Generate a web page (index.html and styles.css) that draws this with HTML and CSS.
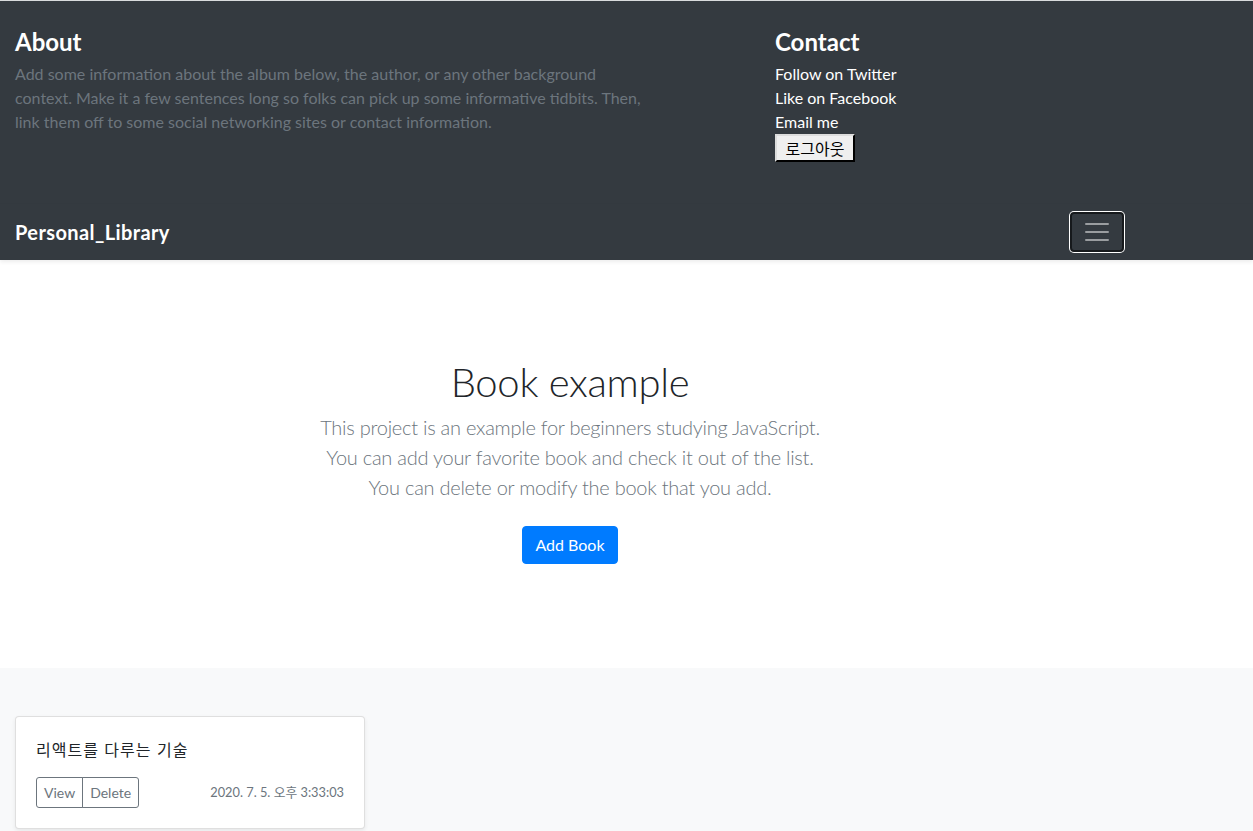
FILE: index.html
```html
<!DOCTYPE html>
<html lang="ko">
<head>
<meta charset="utf-8">
<title>Personal_Library</title>
<link rel="stylesheet" href="styles.css">
</head>
<body>
<header>
  <div class="topline"></div>
  <div class="collapse-panel">
    <div class="container">
      <div class="row">
        <div class="col-about">
          <h4 class="heading">About</h4>
          <p class="about-text">Add some information about the album below, the author, or any other background context. Make it a few sentences long so folks can pick up some informative tidbits. Then, link them off to some social networking sites or contact information.</p>
        </div>
        <div class="col-contact">
          <h4 class="heading">Contact</h4>
          <ul class="contact-list">
            <li><a href="#">Follow on Twitter</a></li>
            <li><a href="#">Like on Facebook</a></li>
            <li><a href="#">Email me</a></li>
            <button class="logout" type="button">로그아웃</button>
          </ul>
        </div>
      </div>
    </div>
  </div>
  <div class="navbar">
    <div class="container nav-inner">
      <a href="#" class="brand"><strong>Personal_Library</strong></a>
      <button class="toggler" type="button" aria-label="Toggle navigation">
        <svg width="30" height="30" viewBox="0 0 30 30"><path stroke="rgba(255,255,255,0.5)" stroke-linecap="round" stroke-miterlimit="10" stroke-width="2" d="M4 7h22M4 15h22M4 23h22"/></svg>
      </button>
    </div>
  </div>
</header>
<main>
  <section class="jumbotron">
    <div class="container">
      <h1 class="jumbo-heading">Book example</h1>
      <p class="lead">This project is an example for beginners studying JavaScript.<br>You can add your favorite book and check it out of the list.<br>You can delete or modify the book that you add.</p>
      <p class="last"><a href="#" class="btn-primary">Add Book</a></p>
    </div>
  </section>
  <div class="album">
    <div class="container">
      <div class="cards">
        <div class="card">
          <div class="card-body">
            <p class="card-text">리액트를 다루는 기술</p>
            <div class="card-foot">
              <div class="btn-group">
                <button type="button" class="btn-outline">View</button>
                <button type="button" class="btn-outline">Delete</button>
              </div>
              <small class="date">2020. 7. 5. 오후 3:33:03</small>
            </div>
          </div>
        </div>
      </div>
    </div>
  </div>
</main>
</body>
</html>
```

FILE: styles.css
```css
* { box-sizing: border-box; }
html, body { margin: 0; padding: 0; }
body {
  font-family: "Lato", "Noto Sans CJK KR", sans-serif;
  font-size: 16px;
  line-height: 1.5;
  color: #212529;
  background: #fff;
}
a { text-decoration: none; }
.topline { height: 1px; background: #d9dbdd; }
.container { width: 1140px; padding: 0 15px; margin-left: 0; }
.collapse-panel { background: #343a40; }
.row { display: flex; margin: 0 -15px; }
.col-about { width: 665px; padding: 24px 15px; }
.col-contact { width: 380px; margin-left: 95px; padding: 24px 15px 26px; }
.heading {
  margin: 0 0 8px;
  font-size: 24px;
  line-height: 1.2;
  font-weight: 700;
  color: #fff;
  padding-top: 3px;
  height: 28.8px;
}
.about-text { margin: 0 0 16px; color: #6c757d; }
.contact-list { list-style: none; margin: 0 0 16px; padding: 0; }
.contact-list a { color: #fff; }
.logout {
  display: block;
  font-family: "Noto Sans CJK KR", sans-serif;
  font-size: 16px;
  line-height: 24px;
  height: 28px;
  width: 80px;
  padding: 0 4px;
  background: #efefef;
  color: #000;
  border: 2px outset #767676;
  border-top-color: #dcdcdc;
  border-left-color: #dcdcdc;
  border-right-color: #555;
  border-bottom-color: #555;
  border-radius: 0;
}
.navbar {
  background: #343a40;
  padding: 8px 0;
  box-shadow: 0 2px 4px rgba(0,0,0,.075);
  position: relative;
}
.nav-inner { display: flex; align-items: center; justify-content: space-between; }
.brand { color: #fff; font-size: 20px; line-height: 30px; padding: 5px 0; letter-spacing: 0.4px; }
.toggler {
  width: 54px;
  height: 40px;
  margin-right: 1px;
  padding: 0;
  display: flex;
  align-items: center;
  justify-content: center;
  background: #343a40;
  border: 2px solid #16191c;
  border-radius: 4px;
  box-shadow: 0 0 0 1px #fff;
}
.jumbotron { padding: 96px 0; text-align: center; background: #fff; }
.jumbo-heading {
  margin: 0 0 8px;
  font-size: 40px;
  line-height: 48px;
  font-weight: 300;
  color: #212529;
  letter-spacing: -0.3px;
  padding-top: 2px;
  height: 48px;
}
.lead { margin: 0 0 16px; font-size: 20px; line-height: 30px; font-weight: 300; color: #6c757d; letter-spacing: -0.25px; height: 90px; }
.last { margin: 0; }
.btn-primary {
  display: inline-block;
  margin: 8px 0;
  padding: 6px 12px;
  line-height: 24px;
  font-size: 16px;
  color: #fff;
  background: #007bff;
  border: 1px solid #007bff;
  border-radius: 4px;
  vertical-align: middle;
}
.album { background: #f8f9fa; padding: 48px 0; }
.cards { display: grid; grid-template-columns: repeat(3, 1fr); column-gap: 30px; }
.card {
  background: #fff;
  border: 1px solid rgba(0,0,0,.125);
  border-radius: 4px;
  box-shadow: 0 2px 4px rgba(0,0,0,.075);
  margin-bottom: 24px;
}
.card-body { padding: 20px; }
.card-text { margin: 0 0 16px; font-family: "Noto Sans CJK KR", sans-serif; letter-spacing: 1px; }
.card-foot { display: flex; justify-content: space-between; align-items: center; }
.btn-group { display: flex; }
.btn-outline {
  font-family: "Lato", sans-serif;
  font-size: 14px;
  line-height: 21px;
  padding: 4px 7px;
  color: #6c757d;
  background: transparent;
  border: 1px solid #6c757d;
  border-radius: 3px;
}
.btn-outline:first-child { border-top-right-radius: 0; border-bottom-right-radius: 0; }
.btn-outline:last-child { border-top-left-radius: 0; border-bottom-left-radius: 0; margin-left: -1px; }
.date { font-size: 12.8px; color: #6c757d; font-family: "Lato", "Noto Sans CJK KR", sans-serif; }
```
